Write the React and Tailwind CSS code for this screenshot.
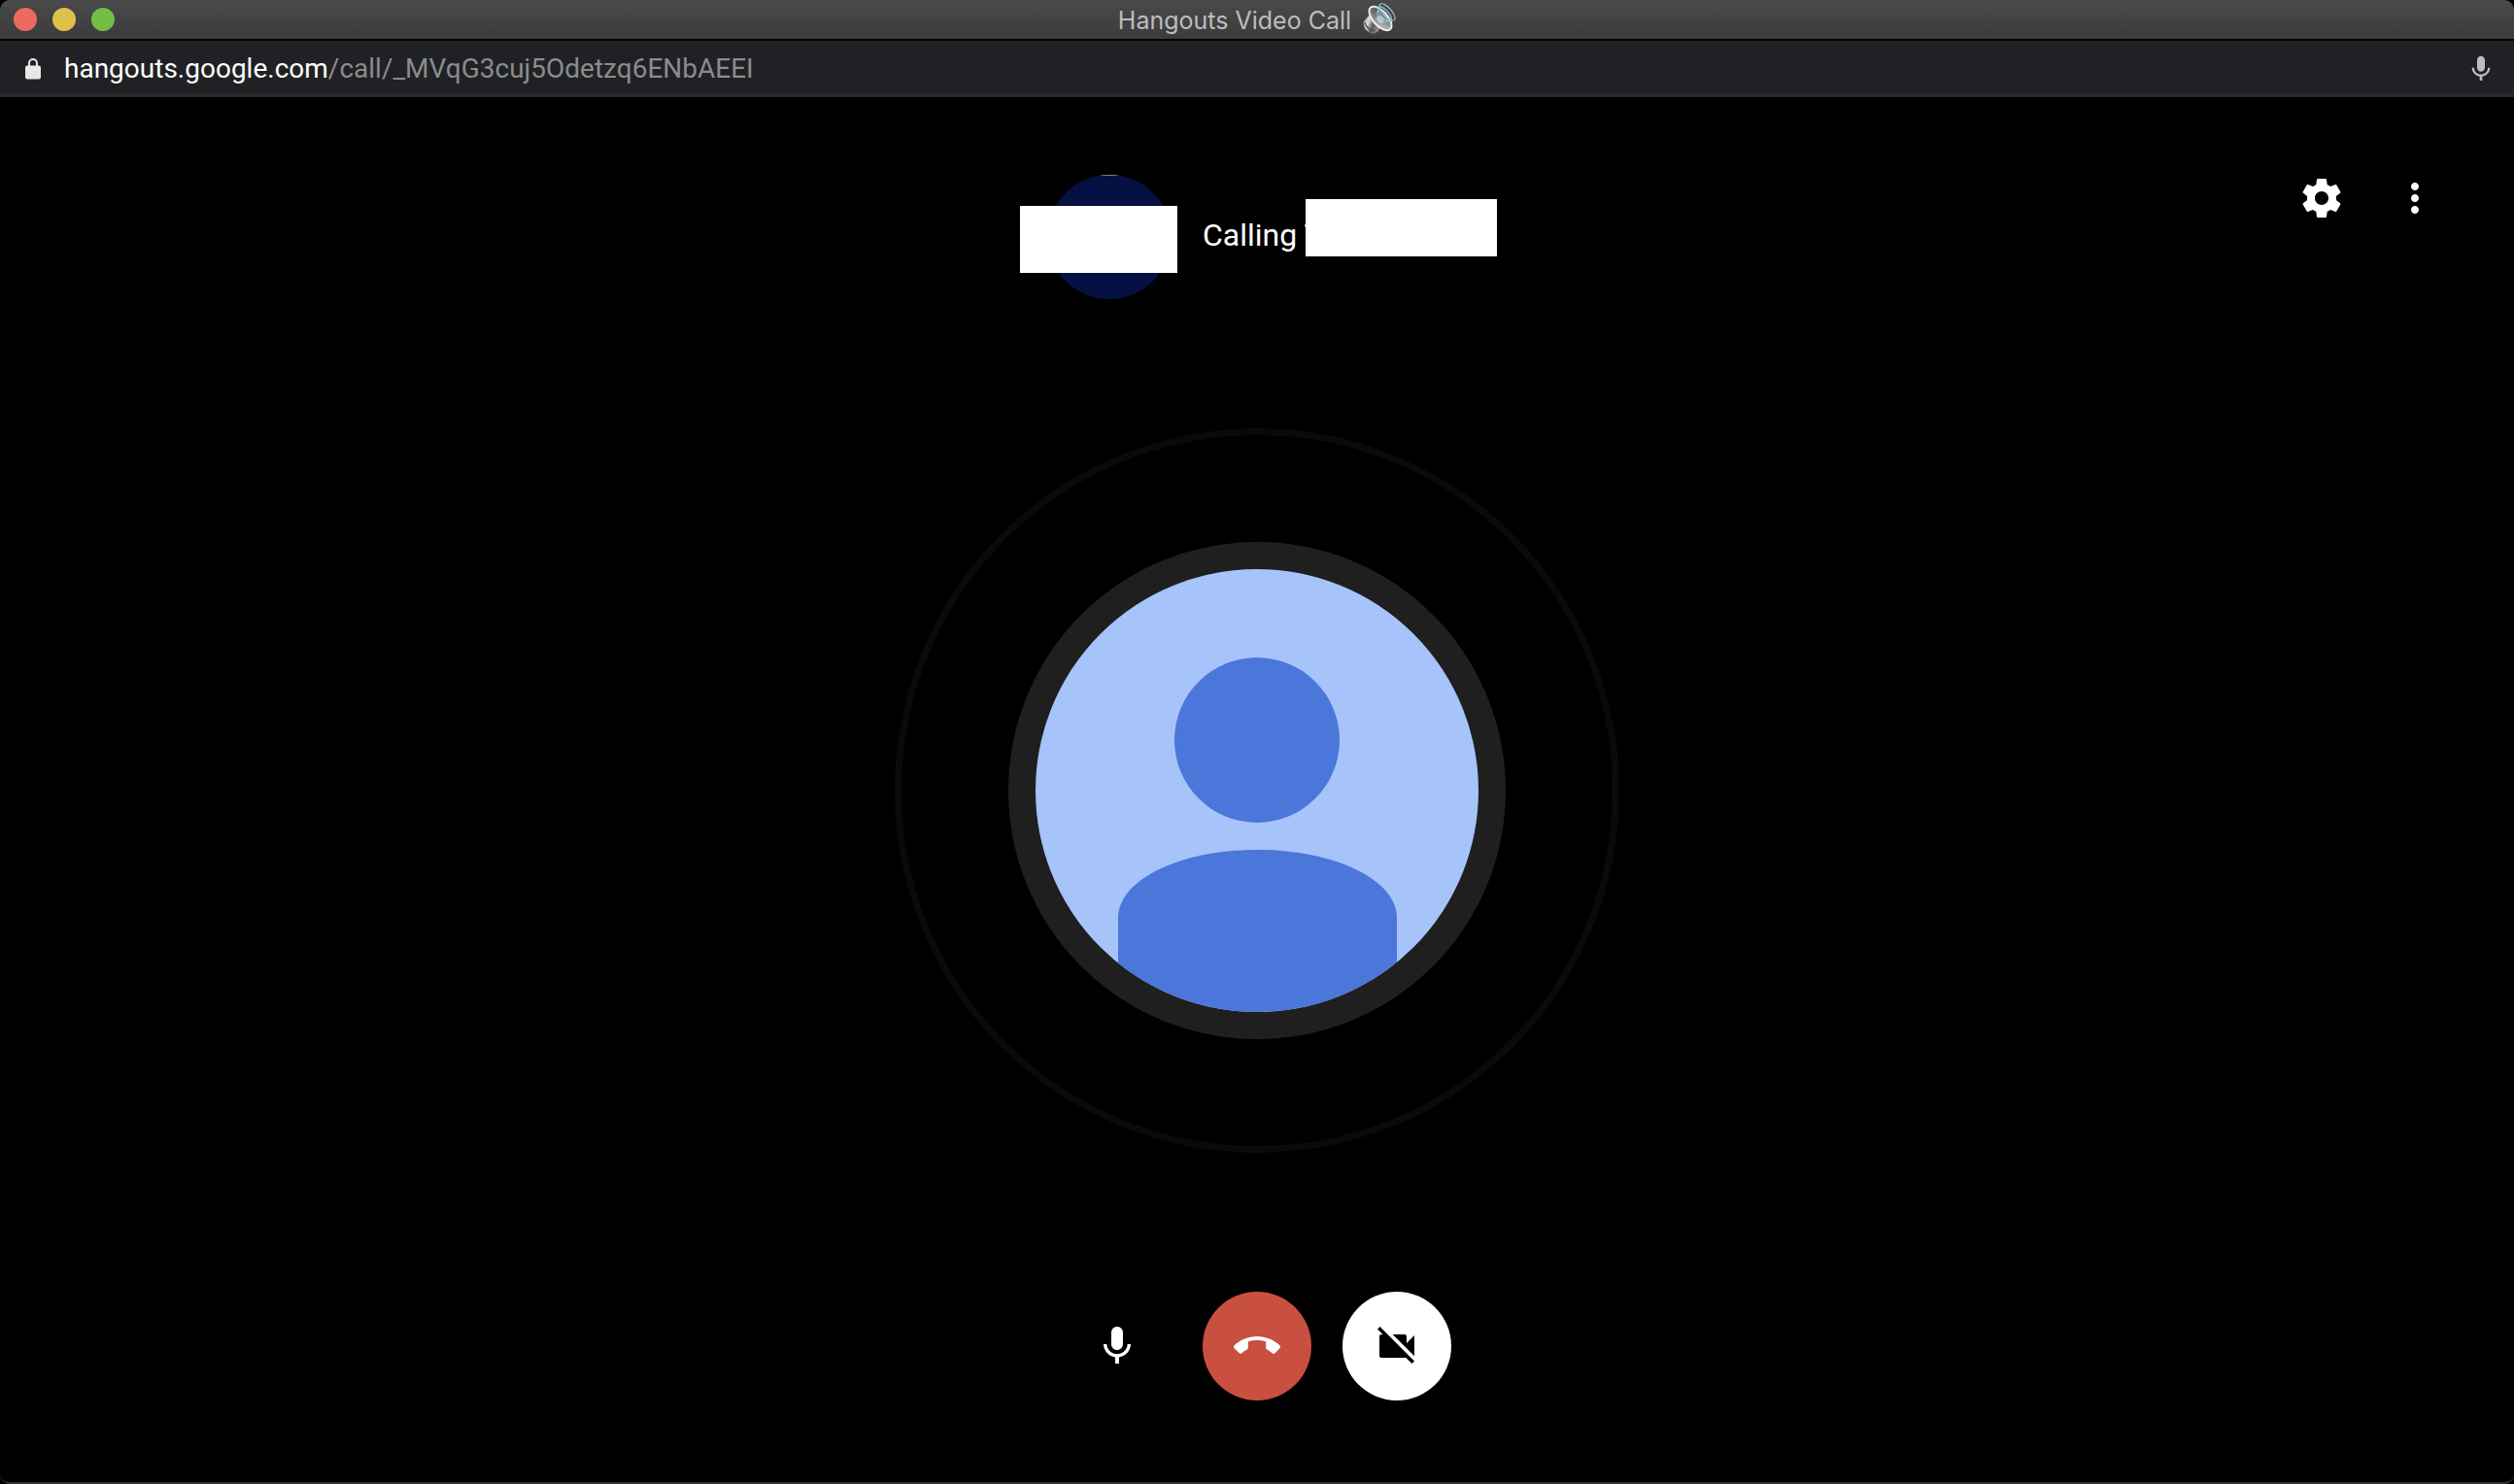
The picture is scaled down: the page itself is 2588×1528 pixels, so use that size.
const ICONS = {
  mic: "M12 14c1.66 0 2.99-1.34 2.99-3L15 5c0-1.66-1.34-3-3-3S9 3.34 9 5v6c0 1.66 1.34 3 3 3zm5.3-3c0 3-2.54 5.1-5.3 5.1S6.7 14 6.7 11H5c0 3.41 2.72 6.23 6 6.72V21h2v-3.28c3.28-.48 6-3.3 6-6.72h-1.7z",
  settings:
    "M19.43 12.98c.04-.32.07-.64.07-.98s-.03-.66-.07-.98l2.11-1.65c.19-.15.24-.42.12-.64l-2-3.46c-.12-.22-.39-.3-.61-.22l-2.49 1c-.52-.4-1.08-.73-1.69-.98l-.38-2.65C14.46 2.18 14.25 2 14 2h-4c-.25 0-.46.18-.49.42l-.38 2.65c-.61.25-1.17.59-1.69.98l-2.49-1c-.23-.09-.49 0-.61.22l-2 3.46c-.13.22-.07.49.12.64l2.11 1.65c-.04.32-.07.65-.07.98s.03.66.07.98l-2.11 1.65c-.19.15-.24.42-.12.64l2 3.46c.12.22.39.3.61.22l2.49-1c.52.4 1.08.73 1.69.98l.38 2.65c.03.24.24.42.49.42h4c.25 0 .46-.18.49-.42l.38-2.65c.61-.25 1.17-.59 1.69-.98l2.49 1c.23.09.49 0 .61-.22l2-3.46c.12-.22.07-.49-.12-.64l-2.11-1.65zM12 15.5c-1.93 0-3.5-1.57-3.5-3.5s1.57-3.5 3.5-3.5 3.5 1.57 3.5 3.5-1.57 3.5-3.5 3.5z",
  more: "M12 8c1.1 0 2-.9 2-2s-.9-2-2-2-2 .9-2 2 .9 2 2 2zm0 2c-1.1 0-2 .9-2 2s.9 2 2 2 2-.9 2-2-.9-2-2-2zm0 6c-1.1 0-2 .9-2 2s.9 2 2 2 2-.9 2-2-.9-2-2-2z",
  hangup:
    "M12 9c-1.6 0-3.15.25-4.6.72v3.1c0 .39-.23.74-.56.9-.98.49-1.87 1.12-2.66 1.85-.18.18-.43.28-.7.28-.28 0-.53-.11-.71-.29L.29 13.08c-.18-.17-.29-.42-.29-.7 0-.28.11-.53.29-.71C3.34 8.78 7.46 7 12 7s8.66 1.78 11.71 4.67c.18.18.29.43.29.71 0 .28-.11.53-.29.71l-2.48 2.48c-.18.18-.43.29-.71.29-.27 0-.52-.11-.7-.28-.79-.74-1.69-1.36-2.67-1.85-.33-.16-.56-.5-.56-.9v-3.1C15.15 9.25 13.6 9 12 9z",
  cameraOff:
    "M21 6.5l-4 4V7c0-.55-.45-1-1-1H9.82L21 17.18V6.5zM3.27 2L2 3.27 4.73 6H4c-.55 0-1 .45-1 1v10c0 .55.45 1 1 1h12c.21 0 .39-.08.54-.18L19.73 21 21 19.73 3.27 2z",
};

function Icon({ name, className }) {
  return (
    <svg viewBox="0 0 24 24" fill="currentColor" aria-hidden="true" className={className}>
      <path d={ICONS[name]} />
    </svg>
  );
}

function Lock() {
  return (
    <svg viewBox="0 0 16 22" aria-hidden="true" className="h-[22px] w-4 text-[#e8e8e8]">
      <path d="M4 9V5a4 4 0 0 1 8 0v4" fill="none" stroke="currentColor" strokeWidth="2" />
      <rect y="7.5" width="16" height="14" rx="2" fill="currentColor" />
    </svg>
  );
}

function Speaker() {
  return (
    <svg viewBox="0 0 34 34" aria-hidden="true" className="size-[34px]">
      <defs>
        <linearGradient id="magnet" x1="0" y1="0" x2="1" y2="0.4">
          <stop offset="0" stopColor="#8b8b8b" />
          <stop offset="0.35" stopColor="#dedede" />
          <stop offset="0.65" stopColor="#5a5a5a" />
          <stop offset="1" stopColor="#8f8f8f" />
        </linearGradient>
        <linearGradient id="cone" x1="0" y1="0" x2="1" y2="1">
          <stop offset="0" stopColor="#45484a" />
          <stop offset="0.5" stopColor="#7d8184" />
          <stop offset="1" stopColor="#d9dcde" />
        </linearGradient>
      </defs>
      <path d="M6 13 1 19c-1.500 5 3 12 9 13l5-2 3-5z" fill="url(#magnet)" />
      <path d="M2 20c1 4.500 5 8 10 9" fill="none" stroke="#4d4d4d" strokeWidth="1.200" />
      <ellipse cx="18" cy="16" rx="15" ry="7.500" transform="rotate(48 18 16)" fill="url(#cone)" stroke="#e9ecee" strokeWidth="2" />
      <ellipse cx="18" cy="17" rx="4.500" ry="3" transform="rotate(48 18 17)" fill="#c5cacc" />
      <g fill="none" stroke="#8fc3cf" strokeWidth="1.200">
        <ellipse cx="20" cy="14" rx="7" ry="3" transform="rotate(48 20 14)" />
        <ellipse cx="22.500" cy="11.500" rx="9.500" ry="4" transform="rotate(48 22.500 11.500)" />
        <ellipse cx="25" cy="9.500" rx="11" ry="4.500" transform="rotate(48 25 9.500)" />
      </g>
    </svg>
  );
}

function TitleBar() {
  return (
    <header className="grid h-[42px] grid-cols-[1fr_auto_1fr] items-center rounded-t-[10px] border-b-2 border-black bg-linear-to-b from-[#4a4a4a] to-[#3b3b3b] px-3.5">
      <div className="flex gap-4">
        <button type="button" aria-label="Close" className="size-6 rounded-full bg-[#ed6a5e]" />
        <button type="button" aria-label="Minimize" className="size-6 rounded-full bg-[#e0c04c]" />
        <button type="button" aria-label="Zoom" className="size-6 rounded-full bg-[#72be47]" />
      </div>
      <div className="flex items-center gap-3">
        <h1 className="pt-0.5 text-[25px] leading-8 text-[#bdbdbd]">Hangouts Video Call</h1>
        <Speaker />
      </div>
    </header>
  );
}

function AddressBar() {
  return (
    <div className="flex h-[58px] items-center gap-6 border-b-4 border-[#282828] bg-[#202124] pt-1 pr-[18px] pl-[26px]">
      <Lock />
      <p className="flex-1 font-['Roboto',sans-serif] text-[28px] leading-8 text-[#8b8c8e]">
        <span className="text-white">hangouts.google.com</span>/call/_MVqG3cuj5Odetzq6ENbAEEI
      </p>
      <button type="button" aria-label="Microphone access" className="text-[#bdbdbd]">
        <Icon name="mic" className="size-8" />
      </button>
    </div>
  );
}

function CallHeader() {
  return (
    <div className="grid grid-cols-[1fr_auto_1fr] items-start px-[78px] pt-20">
      <div className="col-start-2 flex items-center gap-8">
        <div className="relative size-32">
          <div className="size-full overflow-hidden rounded-full bg-[#041142]">
            <div className="mx-auto h-px w-5 bg-[#8a8a94]" />
          </div>
          <div className="absolute top-8 -left-7 h-[69px] w-[162px] bg-white" />
        </div>
        <p className="relative w-[272px] pb-1 font-['Roboto',sans-serif] text-[32px] leading-10 text-white">
          Calling T
          <span className="absolute -top-[17px] left-[106px] h-[59px] w-[197px] bg-white" />
        </p>
      </div>
      <div className="flex justify-end gap-12 text-white">
        <button type="button" aria-label="Settings">
          <Icon name="settings" className="size-12" />
        </button>
        <button type="button" aria-label="More options">
          <Icon name="more" className="size-12" />
        </button>
      </div>
    </div>
  );
}

function CalleeAvatar() {
  return (
    <div className="flex flex-1 items-center justify-center">
      <div className="flex size-[746px] items-center justify-center rounded-full border-[7px] border-[#0a0a0a]">
        <div className="size-[512px] overflow-hidden rounded-full border-[28px] border-[#1f1f1f] bg-[#a6c3fa]">
          <svg viewBox="0 0 456 456" role="img" aria-label="Contact" className="size-full" fill="#4b76da">
            <circle cx="228" cy="176" r="85" />
            <path d="M85 456V359C85 320 149 289 228.500 289S372 320 372 359V456z" />
          </svg>
        </div>
      </div>
    </div>
  );
}

function CallControls() {
  const base = "flex size-28 items-center justify-center rounded-full";
  return (
    <div className="flex justify-center gap-8 pt-2.5 pb-[84px]">
      <button type="button" aria-label="Mute microphone" className={`${base} text-white`}>
        <Icon name="mic" className="size-12" />
      </button>
      <button type="button" aria-label="Leave call" className={`${base} bg-[#c94f41] text-white`}>
        <Icon name="hangup" className="size-12" />
      </button>
      <button type="button" aria-label="Turn on camera" className={`${base} bg-white text-black`}>
        <Icon name="cameraOff" className="size-12" />
      </button>
    </div>
  );
}

export default function App() {
  return (
    <div className="flex min-h-screen flex-col bg-black font-['Inter',sans-serif]">
      <TitleBar />
      <AddressBar />
      <main className="flex flex-1 flex-col rounded-b-[10px] border-b-2 border-[#333333] bg-black">
        <CallHeader />
        <CalleeAvatar />
        <CallControls />
      </main>
    </div>
  );
}
